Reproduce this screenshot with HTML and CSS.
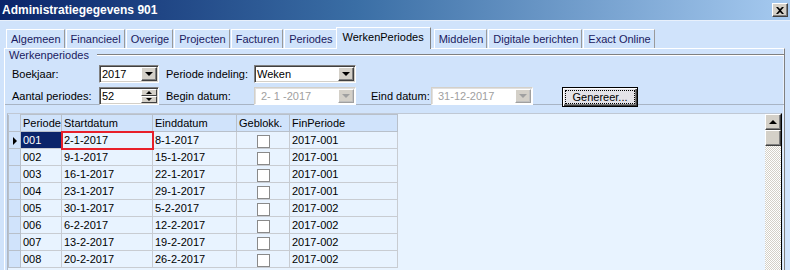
FILE: index.html
```html
<!DOCTYPE html>
<html lang="nl">
  <head>
    <meta charset="UTF-8" />
    <title>Administratiegegevens 901</title>
    <link rel="stylesheet" href="styles.css">
  </head>
  <body>
    <div class="window">
      <div class="titlebar">
        <span class="title">Administratiegegevens 901</span>
        <span class="close-btn">
          <svg width="8" height="7" viewBox="0 0 8 7"><path d="M0 0h2l2 2 2-2h2L5 3.5 8 7H6L4 5 2 7H0l3-3.5z" fill="#000"/></svg>
        </span>
      </div>

      <div class="tabs">
        <div class="tab">Algemeen</div>
        <div class="tab">Financieel</div>
        <div class="tab">Overige</div>
        <div class="tab">Projecten</div>
        <div class="tab">Facturen</div>
        <div class="tab">Periodes</div>
        <div class="tab active">WerkenPeriodes</div>
        <div class="tab">Middelen</div>
        <div class="tab">Digitale berichten</div>
        <div class="tab">Exact Online</div>
      </div>

      <div class="panel">
        <div class="group">
          <div class="group-head">
            <span class="group-label">Werkenperiodes</span>
            <span class="group-line"></span>
          </div>

          <div class="form-row">
            <label class="lbl lbl-first">Boekjaar:</label>
            <div class="combo w58">
              <span class="combo-text">2017</span>
              <span class="drop-btn"><span class="arrow-down"></span></span>
            </div>
            <label class="lbl lbl-second">Periode indeling:</label>
            <div class="combo w101">
              <span class="combo-text">Weken</span>
              <span class="drop-btn"><span class="arrow-down"></span></span>
            </div>
          </div>

          <div class="form-row">
            <label class="lbl lbl-first">Aantal periodes:</label>
            <div class="combo w58">
              <span class="combo-text">52</span>
              <span class="spin-btn">
                <span class="spin-half"><span class="arrow-up"></span></span>
                <span class="spin-half"><span class="arrow-down"></span></span>
              </span>
            </div>
            <label class="lbl lbl-second">Begin datum:</label>
            <div class="combo w101 disabled">
              <span class="combo-text">2- 1 -2017</span>
              <span class="drop-btn"><span class="arrow-down"></span></span>
            </div>
            <label class="lbl lbl-third">Eind datum:</label>
            <div class="combo w101 disabled">
              <span class="combo-text">31-12-2017</span>
              <span class="drop-btn"><span class="arrow-down"></span></span>
            </div>
            <button class="gen-btn"><span class="focus">Genereer...</span></button>
          </div>
        </div>

        <div class="grid">
          <table class="grid-table">
            <thead>
              <tr>
                <th class="ind"></th>
                <th class="c-per">Periode</th>
                <th class="c-start">Startdatum</th>
                <th class="c-eind">Einddatum</th>
                <th class="c-blok">Geblokk.</th>
                <th class="c-fin">FinPeriode</th>
              </tr>
            </thead>
            <tbody id="rows"></tbody>
          </table>
          <div class="grid-fill"></div>
          <div class="scrollbar">
            <div class="sb-btn"><span class="arrow-up"></span></div>
            <div class="sb-thumb"></div>
            <div class="sb-track"></div>
          </div>
        </div>
      </div>
    </div>

    <script>
      const periods = [
        ["001", "2-1-2017", "8-1-2017", "2017-001"],
        ["002", "9-1-2017", "15-1-2017", "2017-001"],
        ["003", "16-1-2017", "22-1-2017", "2017-001"],
        ["004", "23-1-2017", "29-1-2017", "2017-001"],
        ["005", "30-1-2017", "5-2-2017", "2017-002"],
        ["006", "6-2-2017", "12-2-2017", "2017-002"],
        ["007", "13-2-2017", "19-2-2017", "2017-002"],
        ["008", "20-2-2017", "26-2-2017", "2017-002"]
      ];

      const tbody = document.getElementById("rows");
      periods.forEach((p, i) => {
        const first = i === 0;
        tbody.innerHTML += `<tr>
          <td class="ind">${first ? '<span class="row-mark"></span>' : ""}</td>
          <td class="${first ? "selected" : ""}">${p[0]}</td>
          <td class="${first ? "marked" : ""}">${p[1]}</td>
          <td>${p[2]}</td>
          <td class="center"><span class="check"></span></td>
          <td>${p[3]}</td>
        </tr>`;
      });
    </script>
  </body>
</html>
```

FILE: styles.css
```css
body {
  margin: 0;
  font-family: "Liberation Sans", Arial, sans-serif;
  font-size: 11px;
  color: #000;
}

.window {
  width: 790px;
  height: 270px;
  overflow: hidden;
  background: #d0e3fb;
}

/* title bar */
.titlebar {
  height: 20px;
  display: flex;
  align-items: center;
  justify-content: space-between;
  background: linear-gradient(to right, #0a246a, #3a6ea5 45%, #a6caf0);
  border-bottom: 1px solid #e8f0fb;
}

.title {
  color: #fff;
  font-weight: bold;
  font-size: 12px;
  padding-left: 2px;
}

.close-btn {
  width: 14px;
  height: 12px;
  margin-right: 2px;
  display: flex;
  align-items: center;
  justify-content: center;
  background: #d4d0c8;
  border: 1px solid;
  border-color: #fff #404040 #404040 #fff;
  box-shadow: inset -1px -1px #808080;
}

/* tabs */
.tabs {
  display: flex;
  padding: 6px 0 0 6px;
  height: 21px;
  align-items: flex-end;
}

.tab {
  height: 18px;
  line-height: 18px;
  padding: 0 3px 0 4px;
  margin-right: 1px;
  color: #1a1a60;
  border: 1px solid;
  border-color: #fff #9a9a9a transparent #fff;
  border-bottom: none;
}

.tab.active {
  height: 21px;
  line-height: 19px;
  margin: 0 3px 0 -2px;
  padding: 0 6px;
  color: #000;
  border-color: #fff #808080 transparent #fff;
  position: relative;
  top: 1px;
  background: #d0e3fb;
}

/* panel */
.panel {
  margin: 0 5px 0 4px;
  height: 222px;
  border-top: 1px solid #fff;
  border-left: 1px solid #fff;
  border-right: 1px solid #808080;
  box-shadow: inset -1px 0 #e8f0fb;
}

.group {
  border-bottom: 1px solid #a8b4c4;
  height: 55px;
}

.group-head {
  display: flex;
  align-items: center;
  height: 12px;
  padding-left: 4px;
}

.group-label {
  color: #1a1a60;
  padding-right: 8px;
  line-height: 10px;
}

.group-line {
  flex: 1;
  border-top: 1px solid #808080;
  border-bottom: 1px solid #fff;
}

.form-row {
  display: flex;
  align-items: center;
  height: 18px;
  margin-top: 4px;
}

.form-row:first-of-type {
  margin-top: 5px;
}

.lbl-first {
  width: 87px;
  padding-left: 7px;
}

.lbl-second {
  width: 88px;
  padding-left: 7px;
}

.lbl-third {
  width: 60px;
  padding-left: 15px;
}

.combo {
  height: 14px;
  display: flex;
  align-items: center;
  background: #fff;
  border: 1px solid;
  border-color: #808080 #fff #fff #808080;
  box-shadow: inset 1px 1px #404040, inset -1px -1px #d4d0c8;
  padding: 1px 1px 1px 2px;
}

.w58 {
  width: 55px;
}

.w101 {
  width: 97px;
}

.combo-text {
  flex: 1;
}

.combo.disabled {
  border-color: #d4d0c8 #fff #fff #d4d0c8;
  box-shadow: inset 1px 1px #e0e0e0;
}

.combo.disabled .combo-text {
  color: #a0a0a0;
  padding-left: 4px;
}

.drop-btn {
  width: 14px;
  height: 12px;
  display: flex;
  align-items: center;
  justify-content: center;
  background: #d4d0c8;
  border: 1px solid;
  border-color: #fff #404040 #404040 #fff;
  box-shadow: inset -1px -1px #808080;
}

.spin-btn {
  display: flex;
  flex-direction: column;
  width: 16px;
  height: 14px;
}

.spin-half {
  width: 14px;
  height: 5px;
  display: flex;
  align-items: center;
  justify-content: center;
  background: #d4d0c8;
  border: 1px solid;
  border-color: #fff #404040 #404040 #fff;
}

.combo.disabled .drop-btn {
  border-color: #fff #a0a0a0 #a0a0a0 #fff;
  box-shadow: inset -1px -1px #c0c0c0;
}

.combo.disabled .arrow-down {
  border-top-color: #a0a0a0;
}

.arrow-down {
  width: 0;
  height: 0;
  border-left: 4px solid transparent;
  border-right: 4px solid transparent;
  border-top: 4px solid #000;
}

.arrow-up {
  width: 0;
  height: 0;
  border-left: 4px solid transparent;
  border-right: 4px solid transparent;
  border-bottom: 4px solid #000;
}

.spin-half .arrow-up {
  border-width: 0 3px 3px;
}

.spin-half .arrow-down {
  border-width: 3px 3px 0;
}

.gen-btn {
  margin-left: 29px;
  margin-top: 2px;
  width: 76px;
  height: 20px;
  padding: 2px;
  font: inherit;
  background: #e4e3e8;
  border: 1px solid #000;
  box-shadow: inset 1px 1px #fff, inset -1px -1px #404040, inset -2px -2px #808080;
}

.gen-btn .focus {
  display: block;
  border: 1px dotted #000;
  line-height: 12px;
}

/* grid */
.grid {
  display: flex;
  margin: 8px 2px 0 2px;
  height: 160px;
  background: #e8f3ff;
  border-top: 1px solid #c0c8d4;
  border-left: 1px solid #b0b8c4;
  border-right: 1px solid #000;
}

.grid-table {
  border-collapse: collapse;
  align-self: flex-start;
}

.grid-table th,
.grid-table td {
  height: 16px;
  padding: 0 0 0 2px;
  border: 1px solid #c8ccd2;
  text-align: left;
  font-weight: normal;
  white-space: nowrap;
  line-height: 16px;
}

.grid-table th {
  background: #d0e3fb;
  border-color: #b8c0ca;
}

.grid-table td {
  background: #e8f3ff;
}

.grid-table th.ind,
.grid-table td.ind {
  width: 11px;
  background: #d0e3fb;
  border-color: #b8c0ca;
  padding: 0;
  border-top-color: #d0e3fb;
}

.c-per {
  width: 38px;
}

.c-start {
  width: 88px;
}

.c-eind {
  width: 81px;
}

.c-blok {
  width: 50px;
}

.c-fin {
  width: 105px;
}

.grid-table td.selected {
  background: #0a246a;
  color: #fff;
}

.grid-table td.marked {
  outline: 2px solid #e8202a;
  outline-offset: -1px;
}

.grid-table td.center {
  text-align: center;
  padding: 0;
}

.check {
  display: inline-block;
  width: 13px;
  height: 13px;
  background: #fff;
  border: 1px solid #8a8a8a;
  box-sizing: border-box;
  vertical-align: middle;
}

.row-mark {
  display: inline-block;
  margin-left: 4px;
  width: 0;
  height: 0;
  border-top: 4px solid transparent;
  border-bottom: 4px solid transparent;
  border-left: 4px solid #000;
  vertical-align: middle;
}

.grid-fill {
  flex: 1;
}

.scrollbar {
  width: 16px;
  display: flex;
  flex-direction: column;
}

.sb-btn,
.sb-thumb {
  height: 14px;
  background: #d4d0c8;
  border: 1px solid;
  border-color: #fff #404040 #404040 #fff;
  box-shadow: inset -1px -1px #808080;
  display: flex;
  align-items: center;
  justify-content: center;
}

.sb-track {
  flex: 1;
  background-color: #fff;
  background-image: repeating-conic-gradient(#d4d0c8 0 25%, #fff 0 50%);
  background-size: 2px 2px;
}
```
